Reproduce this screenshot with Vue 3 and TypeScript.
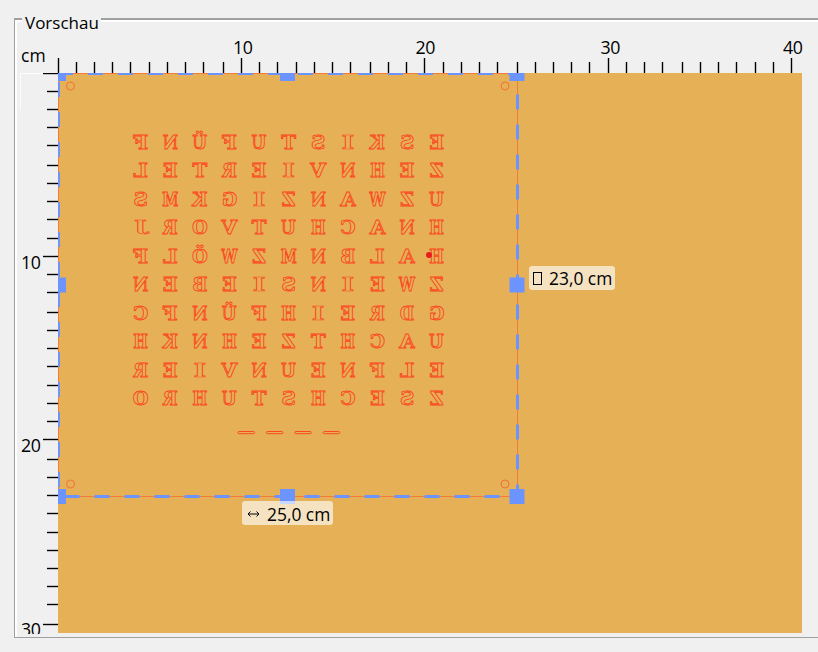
<script setup lang="ts">
interface Glyph {
  char: string
  x: number
  y: number
  sx: number
  sy: number
}

interface Box {
  x: number
  y: number
  w: number
  h: number
}

const rows: string[] = [
  'ESKISTUFÜNF',
  'ZEHNVIERTEL',
  'UZWANZIGKMS',
  'HNACHUTVORJ',
  'HALBNMZWÖLF',
  'ZWEINSIEBEN',
  'GDREIHFÜNFC',
  'UACHTZEHNKH',
  'ELFNEUNVIER',
  'ZSECHSTUHRO',
]

// Horizontal stretch that brings every letter to about the same width
const stretch: Record<string, number> = {
  A: 1.11, B: 0.99, C: 1.06, D: 0.92, E: 1.09, F: 1.18, G: 1, H: 0.87,
  I: 1.5, J: 1.5, K: 0.97, L: 1.16, M: 0.81, N: 0.93, O: 1, Ö: 1,
  R: 1, S: 1.12, T: 1.1, U: 0.94, Ü: 0.94, V: 1.13, W: 0.79, Z: 1.04,
}

// Design coordinates, measured from the material's top-left corner.
// The J hangs below the baseline, so it is lifted and flattened onto it.
const glyphs: Glyph[] = rows.flatMap((row, r) =>
  [...row].map((char, c) => ({
    char,
    x: 378.7 - c * 29.6,
    y: 75.8 + r * 28.5 - (char === 'J' ? 3 : 0),
    sx: stretch[char] ?? 1,
    sy: char === 'J' ? 0.78 : 1,
  })),
)

const topTicks: number[] = [
  0, 18, 36, 54, 72, 91, 109, 127, 145, 165, 183, 201, 219, 238, 256, 274, 292, 312, 330, 348, 366,
  385, 403, 421, 439, 459, 477, 495, 513, 531, 550, 568, 586, 604, 624, 642, 660, 678, 697, 715, 733,
]
const leftTicks: number[] = [
  0, 18, 36, 54, 72, 92, 110, 128, 146, 165, 183, 201, 219, 239, 257, 275, 293, 312, 330, 348, 366,
  386, 404, 422, 440, 459, 477, 495, 513, 531, 551,
]

const topLabels = [
  { text: '10', x: 185 },
  { text: '20', x: 367.5 },
  { text: '30', x: 552.5 },
  { text: '40', x: 735 },
]
const leftLabels = [
  { text: '10', y: 196 },
  { text: '20', y: 379 },
  { text: '30', y: 563 },
]

const handles: Box[] = [
  { x: 0, y: 0, w: 8, h: 8 },
  { x: 222, y: 0, w: 15, h: 8 },
  { x: 451.5, y: 0, w: 15, h: 8 },
  { x: 0, y: 204.5, w: 8, h: 15 },
  { x: 451.5, y: 204.5, w: 15, h: 15 },
  { x: 0, y: 416, w: 8, h: 15 },
  { x: 222, y: 416, w: 15, h: 15 },
  { x: 451.5, y: 416, w: 15, h: 15 },
]
const holes: [number, number][] = [[12.5, 13], [447, 13], [12.5, 411], [447, 411]]
const minuteBars: number[] = [180, 208.4, 236.8, 265.2]
</script>

<template>
  <section class="group">
    <h1 class="legend">Vorschau</h1>
    <div class="preview">
      <div class="unit">cm</div>
      <svg class="ruler-top" width="760" height="43">
        <g v-for="(x, i) in topTicks" :key="x">
          <rect class="shade" :x="x - 1" :y="i % 10 ? 32 : 28" width="3" height="15" />
          <rect class="tick" :x="x" :y="i % 10 ? 32 : 28" width="1" height="15" />
        </g>
        <text v-for="l in topLabels" :key="l.text" :x="l.x" y="24" text-anchor="middle" textLength="20">{{ l.text }}</text>
      </svg>
      <svg class="ruler-left" width="41" height="561">
        <path class="corner" d="M3.5 36V.5H26" />
        <g v-for="(y, i) in leftTicks" :key="y">
          <rect class="shade" :x="i % 10 ? 30 : 26" :y="y - 1" width="16" height="3" />
          <rect class="tick" :x="i % 10 ? 30 : 26" :y="y" width="16" height="1" />
        </g>
        <text v-for="l in leftLabels" :key="l.text" x="4" :y="l.y" textLength="20">{{ l.text }}</text>
      </svg>
      <div class="material">
        <svg class="design" width="744" height="560">
          <path class="edge" d="M0 .5H459.5V423.5H0M.5 0V423" />
          <g class="letters">
            <text
              v-for="(g, i) in glyphs"
              :key="i"
              :transform="`translate(${g.x} ${g.y}) scale(${-g.sx} ${g.sy})`"
              text-anchor="middle"
            >{{ g.char }}</text>
          </g>
          <rect v-for="x in minuteBars" :key="x" class="bar" :x="x" y="358.5" width="16.5" height="2.2" rx="1.1" />
          <circle v-for="([x, y], i) in holes" :key="i" class="hole" :cx="x" :cy="y" r="4" />
          <circle class="laser" cx="371" cy="182" r="3" />
          <path class="dash" d="M0 1H452" stroke-width="2" />
          <path class="dash" d="M1 9V416" stroke-width="2" />
          <path class="dash" d="M6.5 423.5H452" stroke-width="3" />
          <path class="dash" d="M459.5 21.5V416" stroke-width="3" />
          <rect v-for="(h, i) in handles" :key="i" class="handle" :x="h.x" :y="h.y" :width="h.w" :height="h.h" />
        </svg>
        <div class="size height"><i class="box"></i><span>23,0 cm</span></div>
        <div class="size width">
          <svg class="arrow" width="13" height="8"><path d="M1 4H12M3.5 1.5L1 4L3.5 6.5M9.5 1.5L12 4L9.5 6.5" /></svg>
          <span>25,0 cm</span>
        </div>
      </div>
    </div>
  </section>
</template>

<style>
html,
body {
  background: #f0f0f0;
  overflow: hidden;
}
</style>

<style scoped>
.group {
  box-sizing: border-box;
  width: 830px;
  height: 620px;
  margin: 18px 0 0 14px;
  border: solid #a0a0a0;
  border-width: 2px 1px 1px 1px;
  box-shadow: inset 2px 2px #fff, 0 2px #fff;
  font: 18px 'Open Sans', 'Noto Sans', sans-serif;
  color: #000;
}
.legend {
  width: 73px;
  height: 24px;
  margin: -9px 0 0 7px;
  padding: 0 3px;
  background: #f0f0f0;
  font-size: 17px;
  font-weight: 400;
  line-height: 23px;
  white-space: nowrap;
}
.preview {
  display: grid;
  grid-template-columns: 41px 744px;
  grid-template-rows: 38px 561px;
  margin-left: 2px;
}
.unit {
  padding-left: 4px;
  font-size: 17.5px;
  line-height: 40px;
}
.ruler-top {
  margin-top: -5px;
  overflow: visible;
}
.ruler-left {
  overflow: hidden;
}
text {
  font-size: 17.8px;
}
.shade {
  fill: #c0c0c0;
}
.tick {
  fill: #000;
}
.corner {
  fill: none;
  stroke: #fcfcfc;
}
.material {
  position: relative;
  height: 560px;
  background: #e5b056;
}
.design {
  display: block;
}
.edge {
  fill: none;
  stroke: #f47b3c;
}
.letters text {
  fill: none;
  stroke: #fc4420;
  stroke-width: 0.85;
  vector-effect: non-scaling-stroke;
  font: bold 18px 'DejaVu Serif', serif;
}
.bar {
  fill: none;
  stroke: #fb4a22;
}
.hole {
  fill: none;
  stroke: #f47236;
}
.laser {
  fill: #e81c1c;
}
.dash {
  fill: none;
  stroke: #6b94ff;
  stroke-dasharray: 15 15;
}
.handle {
  fill: #6b94ff;
}
.size {
  position: absolute;
  display: flex;
  align-items: center;
  box-sizing: border-box;
  height: 24px;
  border-radius: 3px;
  background: rgba(255, 255, 255, 0.63);
  font-size: 17.4px;
  white-space: nowrap;
}
.height {
  left: 471px;
  top: 193px;
  width: 86px;
  padding-left: 4px;
  gap: 7px;
}
.width {
  left: 184px;
  top: 428px;
  width: 91px;
  padding: 2px 0 0 5px;
  gap: 7px;
}
.box {
  box-sizing: border-box;
  width: 9px;
  height: 13px;
  border: 1px solid #000;
}
.arrow path {
  fill: none;
  stroke: #000;
}
</style>
